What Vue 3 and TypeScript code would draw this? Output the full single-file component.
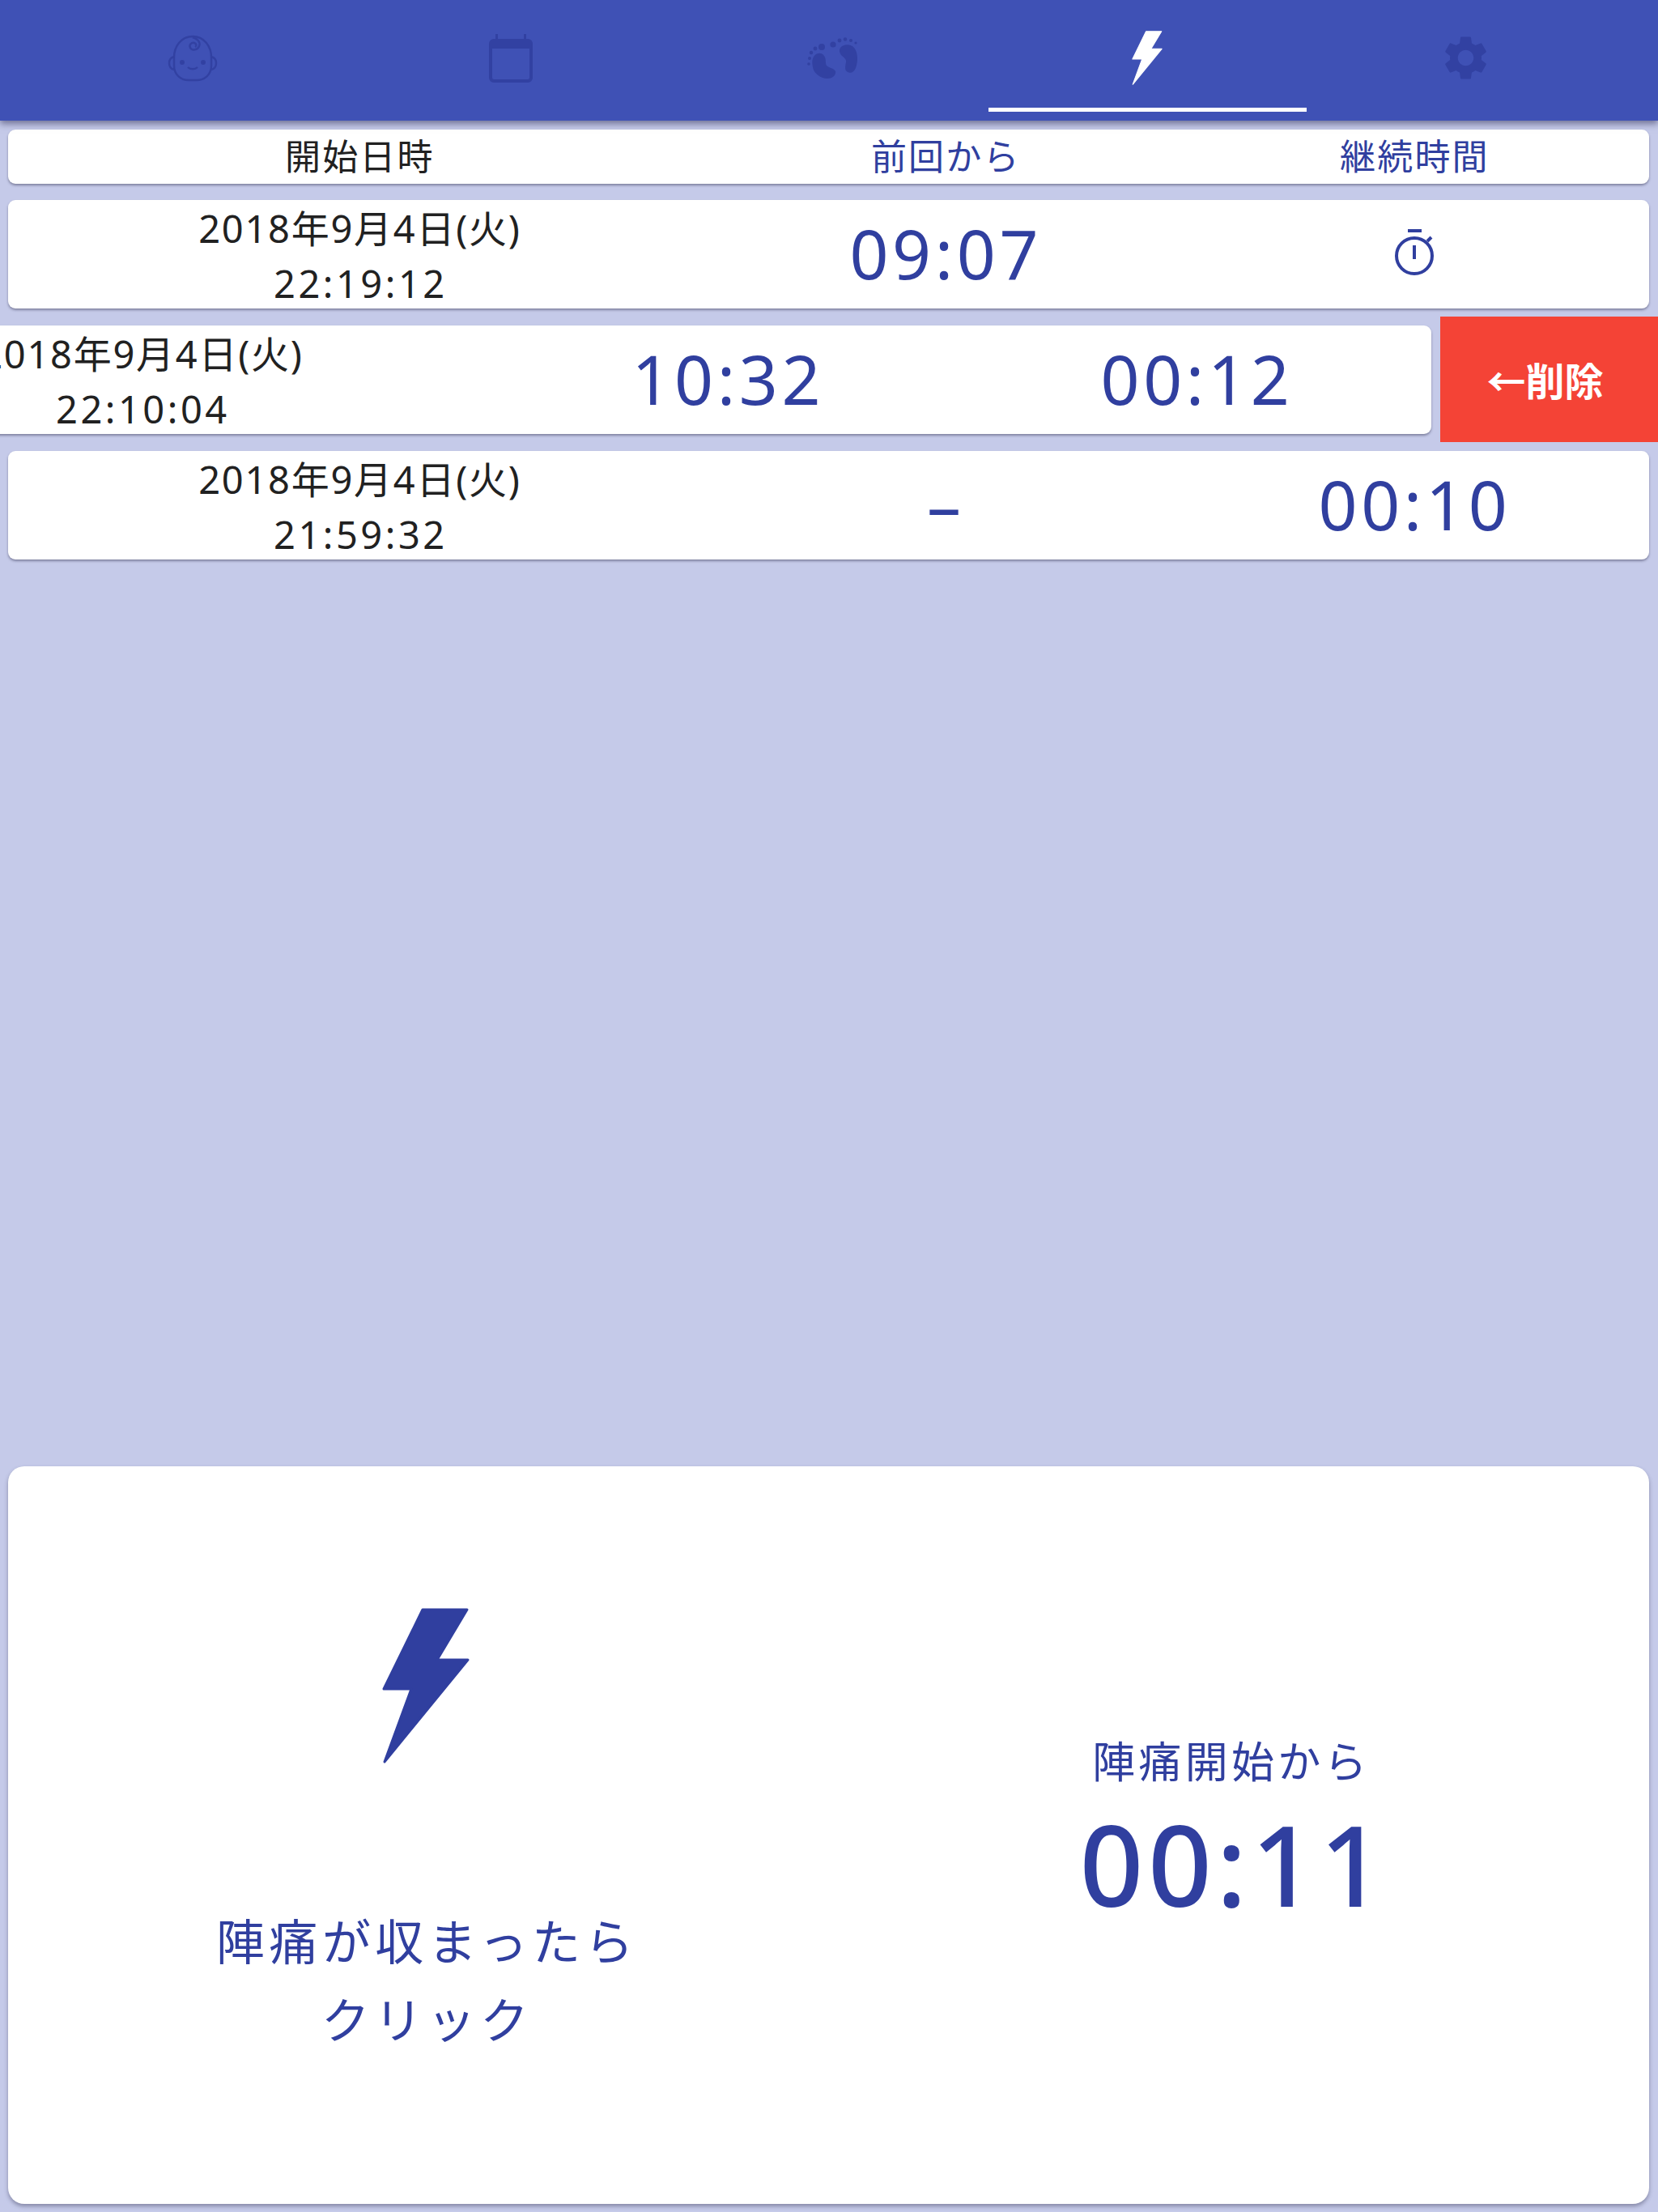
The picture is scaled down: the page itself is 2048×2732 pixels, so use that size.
<template>
  <div class="page">
    <header class="tabs">
      <div class="tab">
        <!-- baby face -->
        <svg class="tab-icon" width="62" height="58" viewBox="0 0 62 58" fill="none" stroke="currentColor" stroke-width="2.4">
          <path d="M31 2C17 2 8 14 8 28v10c0 11 8 18 18 18h10c10 0 18-7 18-18V28C54 14 45 2 31 2z" />
          <path d="M8 27c-4 1-6 4-6 8s2 7 6 8M54 27c4 1 6 4 6 8s-2 7-6 8" />
          <path d="M31 3c6 2 10 6 8 11s-9 6-11 2 2-7 5-6 3 4 1 5" />
          <circle cx="18" cy="34" r="1.8" fill="currentColor" />
          <circle cx="44" cy="34" r="1.8" fill="currentColor" />
          <path d="M25 40c3 3 9 3 12 0" />
        </svg>
      </div>
      <div class="tab">
        <!-- calendar -->
        <svg class="tab-icon" width="54" height="60" viewBox="0 0 54 60" fill="currentColor">
          <rect x="8" y="0" width="3" height="8" />
          <rect x="43" y="0" width="3" height="8" />
          <path fill-rule="evenodd" d="M6 6h42a6 6 0 0 1 6 6v42a6 6 0 0 1-6 6H6a6 6 0 0 1-6-6V12a6 6 0 0 1 6-6zM4 18v36a2 2 0 0 0 2 2h42a2 2 0 0 0 2-2V18z" />
        </svg>
      </div>
      <div class="tab">
        <!-- footprints -->
        <svg class="tab-icon feet" width="64" height="52" viewBox="0 0 64 52" fill="currentColor">
          <path d="M8 24c3-5 10-6 13-1 3 4 1 9 3 12 3 3 9 3 11 7 1 5-4 9-10 9-9 0-17-7-18-14-1-5-1-9 1-13z" />
          <path d="M41 13c4-5 13-5 17 0 5 6 5 17 2 25-2 5-6 7-10 5-4-2-3-7-2-12 1-4-3-6-6-9-2-3-3-6-1-9z" />
          <circle cx="18" cy="12" r="4" />
          <circle cx="10" cy="14" r="2.4" />
          <circle cx="5" cy="19" r="2.2" />
          <circle cx="3" cy="26" r="2" />
          <circle cx="2" cy="33" r="1.8" />
          <circle cx="32" cy="9" r="3.6" />
          <circle cx="40" cy="4" r="2.4" />
          <circle cx="47" cy="2.5" r="2.2" />
          <circle cx="54" cy="4" r="2" />
          <circle cx="60" cy="7" r="1.6" />
        </svg>
      </div>
      <div class="tab active">
        <svg class="bolt-small" width="38" height="67" viewBox="0 0 108 192" fill="currentColor" stroke="currentColor" stroke-width="3" stroke-linejoin="round">
          <path d="M50 2h55L68 64h38L3 190l33-90H2z" />
        </svg>
      </div>
      <div class="tab">
        <svg class="tab-icon" width="65" height="65" viewBox="0 0 24 24" fill="currentColor">
          <path d="M19.14 12.94c.04-.3.06-.61.06-.94 0-.32-.02-.64-.07-.94l2.03-1.58a.49.49 0 0 0 .12-.61l-1.92-3.32a.488.488 0 0 0-.59-.22l-2.39.96c-.5-.38-1.03-.7-1.62-.94l-.36-2.54a.484.484 0 0 0-.48-.41h-3.84c-.24 0-.43.17-.47.41l-.36 2.54c-.59.24-1.13.57-1.62.94l-2.39-.96c-.22-.08-.47 0-.59.22L2.74 8.87c-.12.21-.08.47.12.61l2.03 1.58c-.05.3-.09.63-.09.94s.02.64.07.94l-2.03 1.58a.49.49 0 0 0-.12.61l1.92 3.32c.12.22.37.29.59.22l2.39-.96c.5.38 1.03.7 1.62.94l.36 2.54c.05.24.24.41.48.41h3.84c.24 0 .44-.17.47-.41l.36-2.54c.59-.24 1.13-.56 1.62-.94l2.39.96c.22.08.47 0 .59-.22l1.92-3.32c.12-.22.07-.47-.12-.61l-2.01-1.58zM12 15.6c-1.98 0-3.6-1.62-3.6-3.6s1.62-3.6 3.6-3.6 3.6 1.62 3.6 3.6-1.62 3.6-3.6 3.6z" />
        </svg>
      </div>
    </header>

    <main class="list">
      <div class="card head-row">
        <div class="col-start">開始日時</div>
        <div class="col">前回から</div>
        <div class="col">継続時間</div>
      </div>

      <div v-for="item in records" :key="item.time" class="row-wrap">
        <div v-if="item.swiped" class="delete">←削除</div>
        <div class="card row" :class="{ swiped: item.swiped }">
          <div class="col-start stamp">
            <div class="stamp-date">{{ item.date }}</div>
            <div class="stamp-time">{{ item.time }}</div>
          </div>
          <div class="col big">{{ item.interval }}</div>
          <div class="col big">
            <svg v-if="item.running" class="watch" width="54" height="60" viewBox="0 0 54 60" fill="none" stroke="currentColor" stroke-width="4">
              <path d="M18 2h17" />
              <circle cx="26" cy="33" r="22" />
              <path d="M26 20v17M42 15l5-5" />
            </svg>
            <template v-else>{{ item.duration }}</template>
          </div>
        </div>
      </div>
    </main>

    <section class="panel">
      <div class="stop">
        <svg class="bolt" width="108" height="192" viewBox="0 0 108 192" fill="currentColor" stroke="currentColor" stroke-width="3" stroke-linejoin="round">
          <path d="M50 2h55L68 64h38L3 190l33-90H2z" />
        </svg>
        <div class="stop-label">陣痛が収まったら<br />クリック</div>
      </div>
      <div class="elapsed">
        <div class="elapsed-label">陣痛開始から</div>
        <div class="elapsed-time">00:11</div>
      </div>
    </section>
  </div>
</template>

<script setup lang="ts">
interface ContractionRecord {
  date: string;
  time: string;
  interval: string;
  duration?: string;
  running?: boolean;
  swiped?: boolean;
}

const records: ContractionRecord[] = [
  { date: "2018年9月4日(火)", time: "22:19:12", interval: "09:07", running: true },
  { date: "2018年9月4日(火)", time: "22:10:04", interval: "10:32", duration: "00:12", swiped: true },
  { date: "2018年9月4日(火)", time: "21:59:32", interval: "–", duration: "00:10" },
];
</script>

<style>
html,
body {
  margin: 0;
  background: #c5cae9;
}
</style>

<style scoped>
.page {
  display: flex;
  flex-direction: column;
  height: 2732px;
  overflow: hidden;
  background: #c5cae9;
  font-family: "Noto Sans", "Noto Sans CJK JP", sans-serif;
  color: #303f9f;
}

.tabs {
  display: flex;
  flex: none;
  height: 149px;
  padding: 0 41px;
  background: #3f51b5;
  box-shadow: 0 4px 8px rgba(30, 30, 70, 0.5);
  position: relative;
  z-index: 2;
}

.tab {
  flex: 1;
  display: flex;
  align-items: center;
  justify-content: center;
  padding-bottom: 6px;
  color: #303f9f;
  position: relative;
}

.tab.active {
  color: #fff;
}

.tab.active::after {
  content: "";
  position: absolute;
  left: 0;
  right: 0;
  bottom: 11px;
  height: 5px;
  background: #fff;
}

.tab-icon {
  opacity: 0.85;
}

.feet {
  margin-left: 10px;
}

.list {
  display: flex;
  flex-direction: column;
  flex: 1;
  padding: 11px 11px 0 10px;
}

.card {
  display: flex;
  align-items: center;
  background: #fff;
  border-radius: 9px;
  box-shadow: 0 2px 3px rgba(60, 60, 90, 0.5);
  text-align: center;
  letter-spacing: 0.05em;
}

.head-row {
  height: 67px;
  margin-bottom: 20px;
  padding-bottom: 5px;
  box-sizing: border-box;
  font-size: 44px;
}

.row-wrap {
  position: relative;
  margin-bottom: 21px;
}

.row {
  height: 134px;
  line-height: 68px;
}

.row.swiped {
  transform: translateX(-269px);
}

.col-start {
  flex: 3;
  color: #212121;
}

.stamp {
  padding-top: 3px;
}

.stamp-date {
  font-size: 47px;
  letter-spacing: 0.037em;
}

.stamp-time {
  padding-left: 2px;
  font-size: 47px;
  letter-spacing: 0.075em;
}

.col {
  flex: 2;
}

.big {
  font-size: 84px;
  letter-spacing: 0.055em;
  display: flex;
  align-items: center;
  justify-content: center;
  padding-bottom: 3px;
}

.watch {
  margin-left: 2px;
}

.delete {
  position: absolute;
  top: -11px;
  bottom: -10px;
  right: -11px;
  width: 269px;
  padding: 0 10px 2px 0;
  box-sizing: border-box;
  display: flex;
  align-items: center;
  justify-content: center;
  background: #f44336;
  color: #fff;
  font-size: 48px;
  font-weight: 700;
}

.panel {
  display: flex;
  flex: none;
  align-items: center;
  height: 911px;
  margin: 0 11px 10px 10px;
  background: #fff;
  border-radius: 20px;
  box-shadow: 0 3px 5px rgba(60, 60, 90, 0.45);
  text-align: center;
}

.stop {
  width: 1032px;
  display: flex;
  flex-direction: column;
  align-items: center;
  margin-bottom: 4px;
}

.stop-label {
  margin-top: 172px;
  padding-left: 3px;
  font-size: 60px;
  line-height: 97px;
  letter-spacing: 0.09em;
}

.elapsed {
  width: 964px;
  margin-bottom: 2px;
}

.elapsed-label {
  padding-right: 6px;
  font-size: 53px;
  line-height: 70px;
  letter-spacing: 0.08em;
}

.elapsed-time {
  font-size: 138px;
  font-weight: 500;
  line-height: 180px;
  letter-spacing: 0.04em;
}
</style>
